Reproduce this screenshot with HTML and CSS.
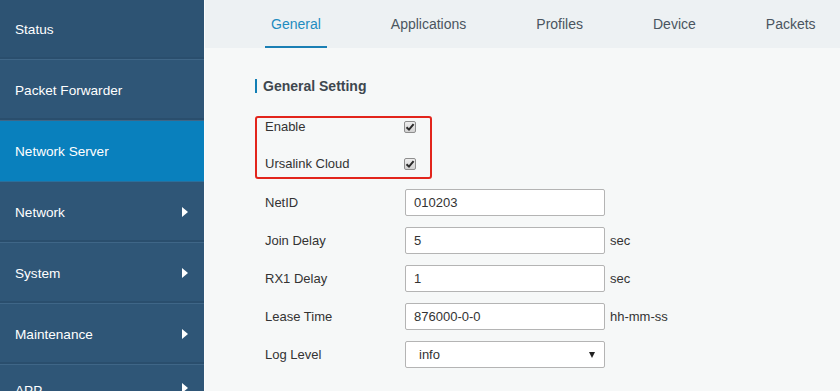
FILE: index.html
```html
<!DOCTYPE html>
<html>
<head>
<meta charset="utf-8">
<link rel="stylesheet" href="styles.css">
</head>
<body>
<div class="app">
  <nav class="sidebar">
    <div class="nav-item">Status</div>
    <div class="nav-item">Packet Forwarder</div>
    <div class="nav-item active">Network Server</div>
    <div class="nav-item">Network<span class="arrow"></span></div>
    <div class="nav-item">System<span class="arrow"></span></div>
    <div class="nav-item">Maintenance<span class="arrow"></span></div>
    <div class="nav-item">APP<span class="arrow"></span></div>
  </nav>
  <main class="main">
    <div class="tabs">
      <div class="tab active">General</div>
      <div class="tab">Applications</div>
      <div class="tab">Profiles</div>
      <div class="tab">Device</div>
      <div class="tab">Packets</div>
    </div>
    <section class="content">
      <h2 class="heading">General Setting</h2>
      <div class="highlight">
        <div class="crow">
          <span class="label">Enable</span>
          <span class="check"><svg width="10" height="10" viewBox="0 0 10 10"><path d="M1.5 5.2 L4 7.6 L8.6 2.2" fill="none" stroke="#2b2b2b" stroke-width="2"/></svg></span>
        </div>
        <div class="crow">
          <span class="label">Ursalink Cloud</span>
          <span class="check"><svg width="10" height="10" viewBox="0 0 10 10"><path d="M1.5 5.2 L4 7.6 L8.6 2.2" fill="none" stroke="#2b2b2b" stroke-width="2"/></svg></span>
        </div>
      </div>
      <div class="rows">
        <div class="row"><span class="label">NetID</span><span class="input">010203</span></div>
        <div class="row"><span class="label">Join Delay</span><span class="input">5</span><span class="unit">sec</span></div>
        <div class="row"><span class="label">RX1 Delay</span><span class="input">1</span><span class="unit">sec</span></div>
        <div class="row"><span class="label">Lease Time</span><span class="input">876000-0-0</span><span class="unit">hh-mm-ss</span></div>
        <div class="row"><span class="label">Log Level</span><span class="input select"><span>info</span><span class="caret"></span></span></div>
      </div>
    </section>
  </main>
</div>
</body>
</html>
```
FILE: styles.css
```css
* { box-sizing: border-box; }
html, body { margin: 0; padding: 0; }
body {
  font-family: "Liberation Sans", Arial, sans-serif;
  background: #f6f8f8;
  width: 840px;
  height: 391px;
  overflow: hidden;
}
.app { display: flex; height: 391px; overflow: hidden; }
.sidebar {
  width: 205px;
  flex: none;
  background: #2f5677;
  border-right: 1px solid #fbfcfc;
  display: flex;
  flex-direction: column;
}
.nav-item {
  height: 61px;
  flex: none;
  display: flex;
  align-items: center;
  justify-content: space-between;
  padding: 0 16px 0 15px;
  color: #fff;
  font-size: 13.6px;
  border-bottom: 1px solid #3f6687;
  box-shadow: inset 0 -2px 0 #2a4e6d;
}
.nav-item:first-child { background: #2d5373; height: 60px; }
.nav-item:last-child { align-items: flex-start; padding-top: 18px; }
.nav-item.active {
  background: #0980bd;
  box-shadow: none;
  border-bottom-color: #2a6f9c;
}
.arrow {
  width: 0; height: 0;
  border-top: 5px solid transparent;
  border-bottom: 5px solid transparent;
  border-left: 6px solid #fff;
}
.main { flex: 1; display: flex; flex-direction: column; }
.tabs {
  height: 48px;
  background: #edf1f3;
  display: flex;
  gap: 58px;
  padding-left: 60px;
  align-items: stretch;
}
.tab {
  padding: 16px 6px 0;
  font-size: 14px;
  color: #4a5560;
  border-bottom: 2px solid transparent;
}
.tab.active { color: #1e8cc0; border-bottom-color: #1a7fb4; }
.content { padding: 31px 0 0 50px; }
.heading {
  margin: 0 0 23px;
  font-size: 14px;
  font-weight: bold;
  color: #3e474f;
  border-left: 2px solid #127fb5;
  padding-left: 6px;
  line-height: 14px;
}
.highlight {
  width: 177px;
  border: 2px solid #e2251c;
  border-radius: 3px;
  padding: 0 0 6px 8px;
  display: flex;
  flex-direction: column;
  gap: 21px;
}
.crow {
  height: 16px;
  display: flex;
  align-items: center;
}
.label {
  width: 140px;
  flex: none;
  font-size: 13px;
  color: #333;
}
.crow .label { width: 139px; }
.check {
  width: 12px; height: 12px;
  border: 1px solid #8e8e8e;
  border-radius: 2px;
  background: linear-gradient(#eeeeee, #d2d2d2);
  display: flex;
  align-items: center;
  justify-content: center;
  margin-top: 2px;
}
.rows {
  margin-top: 10px;
  padding-left: 10px;
  display: flex;
  flex-direction: column;
  gap: 11px;
}
.row { display: flex; align-items: center; height: 27px; }
.input {
  width: 200px;
  height: 27px;
  border: 1px solid #b4b4b4;
  border-radius: 2px;
  background: #fff;
  font-size: 13px;
  color: #333;
  padding: 0 8px;
  display: flex;
  align-items: center;
}
.select { padding: 0 9px 0 13px; justify-content: space-between; }
.caret {
  width: 0; height: 0;
  border-left: 3px solid transparent;
  border-right: 3px solid transparent;
  border-top: 6px solid #222;
}
.unit { margin-left: 5px; font-size: 13px; color: #333; }
```
